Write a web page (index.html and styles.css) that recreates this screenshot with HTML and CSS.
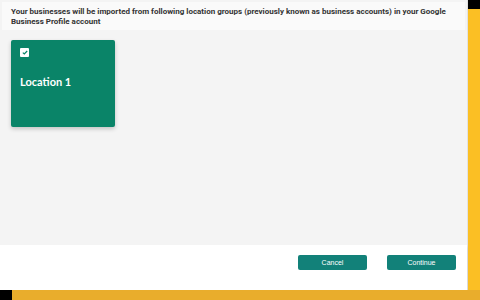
FILE: index.html
```html
<!DOCTYPE html>
<html>
<head>
    <title>Import Locations</title>
    <link rel="stylesheet" href="styles.css">
</head>
<body>
    <div class="dialog">
        <div class="header">
            Your businesses will be imported from following location groups (previously known as business accounts) in your Google Business Profile account
        </div>
        <div class="content">
            <div class="card">
                <span class="check">
                    <svg width="6" height="5" viewBox="0 0 6 5"><path d="M0.8 2.6 L2.3 4 L5.2 1" fill="none" stroke="#0a8468" stroke-width="1.2"/></svg>
                </span>
                <div class="card-title">Location 1</div>
            </div>
        </div>
        <div class="footer">
            <button class="btn">Cancel</button>
            <button class="btn">Continue</button>
        </div>
    </div>
    <div class="side">
        <div class="side-top"></div>
    </div>
    <div class="bottom">
        <div class="bottom-left"></div>
    </div>
</body>
</html>
```

FILE: styles.css
```css
body {
    margin: 0;
    width: 480px;
    height: 300px;
    display: grid;
    grid-template-columns: 468px 12px;
    grid-template-rows: 290px 10px;
    background-color: #f2b62a;
    font-family: "Liberation Sans", Arial, sans-serif;
    overflow: hidden;
}

.dialog {
    display: flex;
    flex-direction: column;
    background-color: #f4f4f4;
    border-right: 1px solid #e2e2e2;
    box-sizing: border-box;
    box-shadow: 0 1px 3px rgba(0, 0, 0, 0.15);
}

.header {
    margin: 2px 2px 0 2px;
    height: 28px;
    padding: 5px 9px 0 9px;
    box-sizing: border-box;
    background-color: #fafafa;
    font-family: Roboto, sans-serif;
    font-size: 8px;
    font-weight: bold;
    line-height: 10px;
    color: #333;
}

.content {
    flex: 1;
    padding: 10px 11px;
}

.card {
    width: 104px;
    height: 87px;
    box-sizing: border-box;
    padding: 8px 9px;
    background-color: #0a8468;
    border-radius: 2px;
    box-shadow: 0 2px 4px rgba(0, 0, 0, 0.2);
}

.check {
    display: flex;
    align-items: center;
    justify-content: center;
    width: 9px;
    height: 9px;
    background-color: #fff;
    border-radius: 1px;
}

.card-title {
    margin-top: 18px;
    font-family: Lato, sans-serif;
    font-size: 11px;
    font-weight: bold;
    color: #fff;
}

.footer {
    height: 45px;
    display: flex;
    justify-content: flex-end;
    align-items: flex-start;
    gap: 20px;
    padding: 10px 11px 0 0;
    box-sizing: border-box;
    background-color: #fff;
    box-shadow: 0 2px 2px rgba(0, 0, 0, 0.12);
}

.btn {
    width: 69px;
    height: 15px;
    padding: 0;
    border: none;
    border-radius: 2px;
    background-color: #128179;
    color: #fff;
    font-family: "Liberation Sans", Arial, sans-serif;
    font-size: 7px;
}

.side {
    background-color: #fbbf24;
}

.side-top {
    height: 9px;
    background-color: #000;
}

.bottom {
    grid-column: 1 / 3;
    background-color: #e9ad2c;
}

.bottom-left {
    width: 12px;
    height: 100%;
    background-color: #000;
}
```
